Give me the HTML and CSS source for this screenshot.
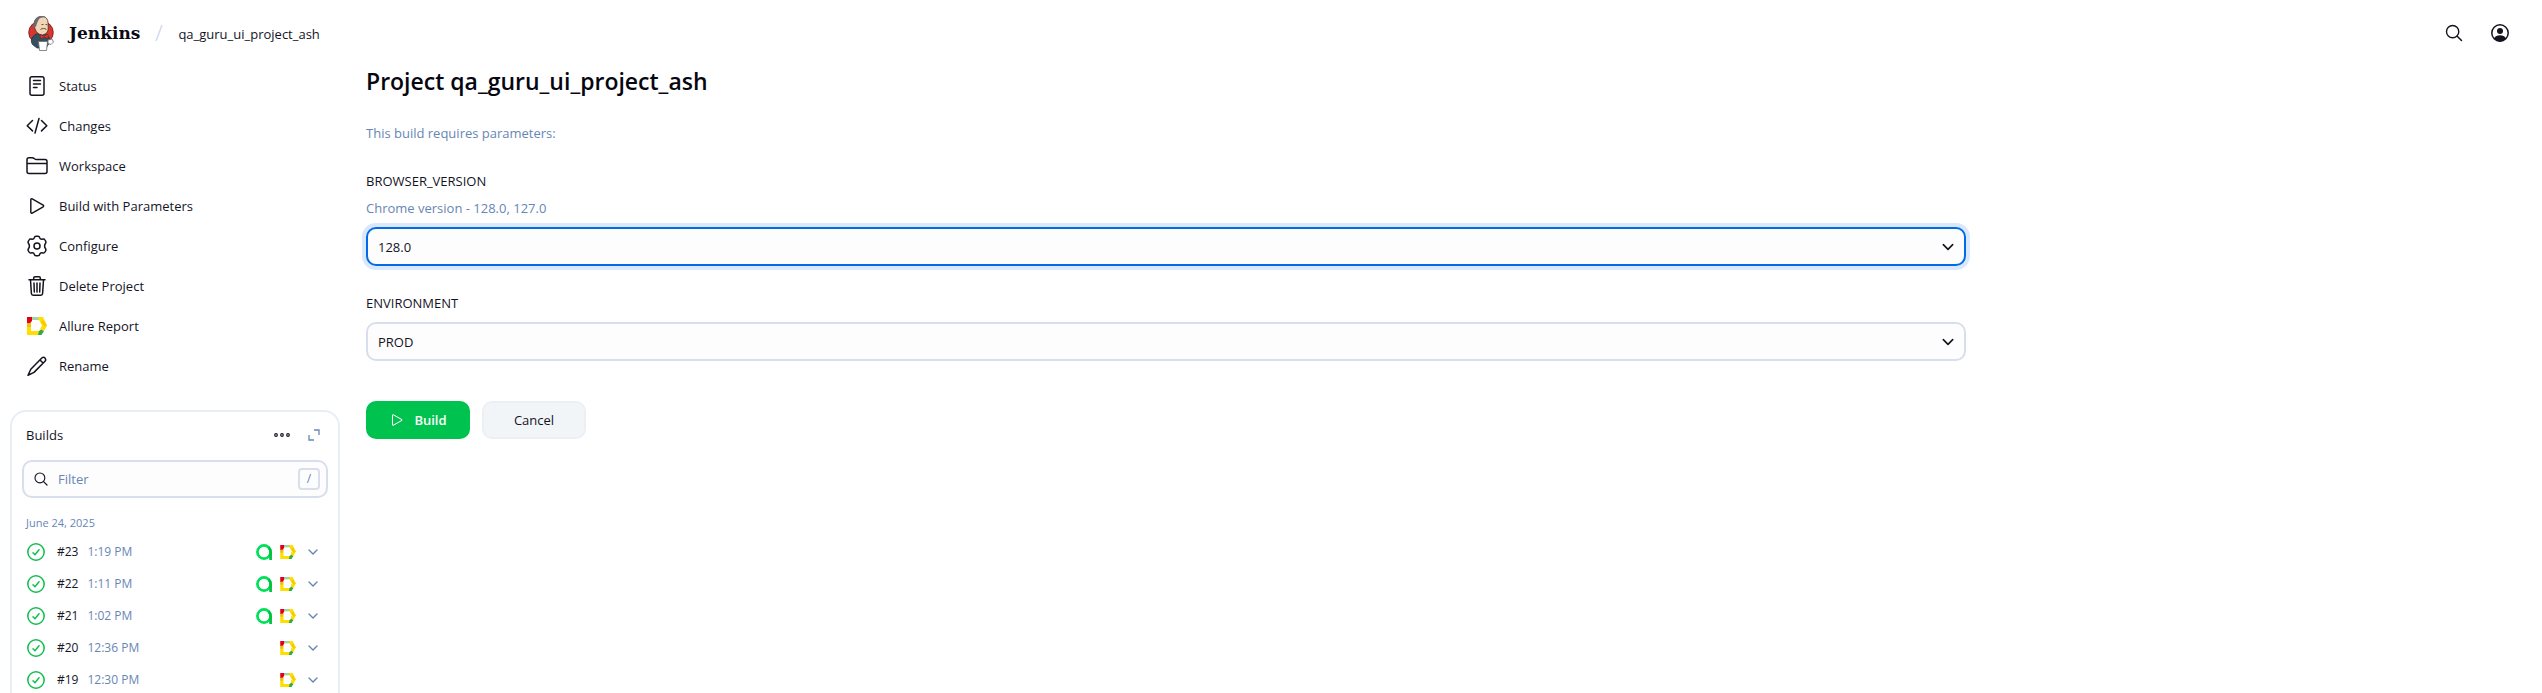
FILE: index.html
```html
<!DOCTYPE html>
<html lang="en">
<head>
<meta charset="utf-8">
<meta name="viewport" content="width=device-width, initial-scale=1">
<title>qa_guru_ui_project_ash [Jenkins]</title>
<link rel="stylesheet" href="styles.css">
</head>
<body>
<svg class="sprite" aria-hidden="true">
  <symbol id="chevron" viewBox="0 0 12 12"><path d="M2 4l4 4 4-4" fill="none" stroke="currentColor" stroke-width="1.400" stroke-linecap="round" stroke-linejoin="round"/></symbol>
  <symbol id="search" viewBox="0 0 512 512"><path d="M221 64a157 157 0 1 0 157 157A157 157 0 0 0 221 64z" fill="none" stroke="currentColor" stroke-width="36"/><path d="M338 338l110 110" fill="none" stroke="currentColor" stroke-width="38" stroke-linecap="round"/></symbol>
  <symbol id="play" viewBox="0 0 512 512"><path d="M112 111v290c0 17 18 28 33 20l254-145c15-9 15-31 0-40L145 91c-15-8-33 3-33 20z" fill="none" stroke="currentColor" stroke-width="34"/></symbol>
  <symbol id="allure" viewBox="0 0 20 18">
    <path d="M0 5h4v9h9v4H0z" fill="#ffde00"/>
    <path d="M0 5h4v5H0z" fill="#efc01c"/>
    <path d="M4 0h9v3H4z" fill="#a2d3a1"/>
    <path d="M11 0h5l4 8.500-3 5.500-4-2 2-3.500L12 3z" fill="#ffde00"/>
    <path d="M16 3l4 5.500-2 1-4-4z" fill="#f3cb00"/>
    <path d="M0 0h5v4L3 6H0z" fill="#e2001a"/>
    <path d="M11 18l1-4 2-1.500 3 1.500-2.500 4z" fill="#38a845"/>
  </symbol>
  <symbol id="testops" viewBox="0 0 16 16"><circle cx="8" cy="8" r="6.600" fill="none" stroke="#00e05a" stroke-width="2.700"/><path d="M12.500 3.300A6.600 6.600 0 0 1 14.600 8v8" fill="none" stroke="#00c340" stroke-width="2.700"/></symbol>
  <symbol id="success" viewBox="0 0 18 18"><g fill="none" stroke="#13bf50"><circle cx="9" cy="9" r="8.200" stroke-width="1.500"/><path d="M6 9.700l2 2 4-5" stroke-width="1.500" stroke-linecap="round" stroke-linejoin="round"/></g></symbol>
</svg>

<header class="header">
  <a class="brand" href="#">
    <svg class="brand-logo" viewBox="0 0 26 36" aria-hidden="true">
      <ellipse cx="13" cy="17.500" rx="12.300" ry="11.500" fill="#d33833" stroke="#7e1815" stroke-width=".8"/>
      <path d="M5 30C2 27 3 22 8 19h9c4 2 5 5 5 8l-4 6H9z" fill="#335061" stroke="#1d2c35" stroke-width=".7"/>
      <path d="M6.500 12C5.500 5 9 1.500 14 1.500s6.500 4 6 9c1 6-1.500 8.500-5.500 9.500-4.500-.5-7-3.500-8-8z" fill="#f0d6b7" stroke="#413024" stroke-width=".8"/>
      <path d="M5.500 13C4.500 5 8.500 1 13.500 1c2 0 3.500.5 4.500 1.500-4-.5-6.500.5-7.500 2.500S9 8.500 8.500 10s-1.500 3.500-3 3z" fill="#6d6b6d"/>
      <path d="M12.500 14.500c2-1.500 4-1.300 6 0M13.500 9.500h2M17.500 9.500H19" stroke="#6b4f3c" stroke-width="1" fill="none"/>
      <path d="M12 19.500l4 1.500 4-2v4.500L16 22l-3.500 2z" fill="#d33833" stroke="#7e1815" stroke-width=".6"/>
      <path d="M10.500 26.500h9l-1 9h-7z" fill="#fff" stroke="#6d6b6d" stroke-width=".8"/>
      <path d="M20 25l4-1 1.500 3-2.500 2.500-3-1z" fill="#fff" stroke="#6d6b6d" stroke-width=".8"/>
    </svg>
    <span class="brand-name">Jenkins</span>
  </a>
  <svg class="crumb-slash" viewBox="0 0 8 18" aria-hidden="true"><path d="M7 1L1 17" stroke="#cfdcee" stroke-width="1.500"/></svg>
  <a class="crumb" href="#">qa_guru_ui_project_ash</a>
  <div class="header-actions">
    <button class="icon-button" type="button" aria-label="Search"><svg class="icon" aria-hidden="true"><use href="#search"/></svg></button>
    <button class="icon-button" type="button" aria-label="Account"><svg class="icon" viewBox="0 0 20 20" aria-hidden="true"><circle cx="10" cy="10" r="8.200" fill="none" stroke="currentColor" stroke-width="1.500"/><circle cx="10" cy="8" r="3" fill="currentColor"/><path d="M4 15.500c1-2.500 3.500-3.200 6-3.200s5 .7 6 3.200A8.300 8.300 0 0 1 10 18.500a8.300 8.300 0 0 1-6-3z" fill="currentColor"/></svg></button>
  </div>
</header>

<div class="page">
  <aside class="side">
    <nav class="tasks">
      <a class="task" href="#"><svg class="task-icon" viewBox="0 0 22 22" aria-hidden="true"><g fill="none" stroke="currentColor" stroke-width="1.500" stroke-linecap="round"><rect x="4" y="1.700" width="14" height="18.600" rx="2"/><path d="M7.500 5.500h7M7.500 9h7M7.500 12.500h3.500"/></g></svg>Status</a>
      <a class="task" href="#"><svg class="task-icon" viewBox="0 0 22 22" aria-hidden="true"><path d="M6.500 5.500L1.200 10.700l5.300 5.200M15.500 5.500l5.300 5.200-5.300 5.200M13 3.500L9 18" fill="none" stroke="currentColor" stroke-width="1.500" stroke-linecap="round" stroke-linejoin="round"/></svg>Changes</a>
      <a class="task" href="#"><svg class="task-icon" viewBox="0 0 22 22" aria-hidden="true"><path d="M1 16.500V4.800Q1 2.800 3 2.800h3.200q1 0 1.800.6l.8.600q.6.400 1.500.4H19q2 0 2 2v10.100q0 2-2 2H3q-2 0-2-2zM1 8.500h20" fill="none" stroke="currentColor" stroke-width="1.500"/></svg>Workspace</a>
      <a class="task" href="#"><svg class="task-icon" aria-hidden="true"><use href="#play"/></svg>Build with Parameters</a>
      <a class="task" href="#"><svg class="task-icon" viewBox="0 0 22 22" aria-hidden="true"><g fill="none" stroke="currentColor" stroke-width="1.500" stroke-linejoin="round"><circle cx="11" cy="11" r="3"/><path d="M8.300 2.700Q8.600 1.300 10 1.300h2q1.400 0 1.700 1.400.5 1.600 2.200 1.500l1.200-.2q1.300-.2 1.900 1l.7 1.300q.6 1.200-.3 2.200-1.600 2.500 0 5 .9 1 .3 2.200L19 17q-.6 1.200-1.900 1l-1.200-.2q-1.700-.1-2.200 1.500-.3 1.400-1.700 1.400h-2q-1.400 0-1.700-1.400-.5-1.600-2.200-1.500l-1.200.2q-1.300.2-1.900-1l-.7-1.300q-.6-1.200.3-2.200 1.600-2.500 0-5-.9-1-.3-2.200L3 5q.6-1.200 1.900-1l1.200.2q1.700.1 2.200-1.500z"/></g></svg>Configure</a>
      <a class="task" href="#"><svg class="task-icon" viewBox="0 0 22 22" aria-hidden="true"><path d="M4.500 5l.9 13.500q.1 1.700 1.800 1.700h7.600q1.700 0 1.800-1.700L17.500 5M3 4.700h16M7.700 4.500V3q0-1.300 1.300-1.300h4q1.300 0 1.300 1.300v1.500M11 8v9M8 8l.3 9M14 8l-.3 9" fill="none" stroke="currentColor" stroke-width="1.500" stroke-linecap="round"/></svg>Delete Project</a>
      <a class="task" href="#"><svg class="task-icon task-icon--allure" aria-hidden="true"><use href="#allure"/></svg>Allure Report</a>
      <a class="task" href="#"><svg class="task-icon" viewBox="0 0 22 22" aria-hidden="true"><path d="M15.800 3l-11 11.200L2 20.200l6-2.800L19 6.200q1.400-1.600 0-3.200t-3.200 0zM14 5l3 3" fill="none" stroke="currentColor" stroke-width="1.500" stroke-linejoin="round"/></svg>Rename</a>
    </nav>

    <section class="builds">
      <div class="builds-head">
        <h2 class="builds-title">Builds</h2>
        <button class="mini-button" type="button" aria-label="More actions"><svg class="dots" viewBox="0 0 16 6" aria-hidden="true"><g fill="none" stroke="currentColor" stroke-width="1.200"><circle cx="2" cy="3" r="1.300"/><circle cx="8" cy="3" r="1.300"/><circle cx="14" cy="3" r="1.300"/></g></svg></button>
        <a class="mini-button mini-button--muted" href="#" aria-label="Expand"><svg class="expand" viewBox="0 0 12 12" aria-hidden="true"><path d="M6 1h5v5M1 6v5h5" fill="none" stroke="currentColor" stroke-width="1.300"/></svg></a>
      </div>
      <div class="filter">
        <svg class="filter-icon" aria-hidden="true"><use href="#search"/></svg>
        <input class="filter-input" type="text" placeholder="Filter" aria-label="Filter builds">
        <kbd class="filter-key">/</kbd>
      </div>
      <h3 class="builds-date">June 24, 2025</h3>
      <ul class="build-list">
        <li class="build"><svg class="build-status"><use href="#success"/></svg><a class="build-link" href="#">#23</a><span class="build-time">1:19 PM</span><svg class="badge"><use href="#testops"/></svg><svg class="badge badge--allure"><use href="#allure"/></svg><button class="build-menu" type="button" aria-label="Build 23 menu"><svg class="chevron"><use href="#chevron"/></svg></button></li>
        <li class="build"><svg class="build-status"><use href="#success"/></svg><a class="build-link" href="#">#22</a><span class="build-time">1:11 PM</span><svg class="badge"><use href="#testops"/></svg><svg class="badge badge--allure"><use href="#allure"/></svg><button class="build-menu" type="button" aria-label="Build 22 menu"><svg class="chevron"><use href="#chevron"/></svg></button></li>
        <li class="build"><svg class="build-status"><use href="#success"/></svg><a class="build-link" href="#">#21</a><span class="build-time">1:02 PM</span><svg class="badge"><use href="#testops"/></svg><svg class="badge badge--allure"><use href="#allure"/></svg><button class="build-menu" type="button" aria-label="Build 21 menu"><svg class="chevron"><use href="#chevron"/></svg></button></li>
        <li class="build"><svg class="build-status"><use href="#success"/></svg><a class="build-link" href="#">#20</a><span class="build-time">12:36 PM</span><svg class="badge badge--allure"><use href="#allure"/></svg><button class="build-menu" type="button" aria-label="Build 20 menu"><svg class="chevron"><use href="#chevron"/></svg></button></li>
        <li class="build"><svg class="build-status"><use href="#success"/></svg><a class="build-link" href="#">#19</a><span class="build-time">12:30 PM</span><svg class="badge badge--allure"><use href="#allure"/></svg><button class="build-menu" type="button" aria-label="Build 19 menu"><svg class="chevron"><use href="#chevron"/></svg></button></li>
      </ul>
    </section>
  </aside>

  <main class="main">
    <h1 class="title">Project qa_guru_ui_project_ash</h1>
    <p class="intro">This build requires parameters:</p>
    <form class="form">
      <div class="field">
        <label class="label" for="browser-version">BROWSER_VERSION</label>
        <p class="hint" id="browser-hint">Chrome version - 128.0, 127.0</p>
        <div class="select-wrap">
          <select class="select select--active" id="browser-version" aria-describedby="browser-hint"><option>128.0</option><option>127.0</option></select>
          <svg class="select-chevron" aria-hidden="true"><use href="#chevron"/></svg>
        </div>
      </div>
      <div class="field">
        <label class="label" for="environment">ENVIRONMENT</label>
        <div class="select-wrap">
          <select class="select" id="environment"><option>PROD</option></select>
          <svg class="select-chevron" aria-hidden="true"><use href="#chevron"/></svg>
        </div>
      </div>
      <div class="actions">
        <button class="button button--primary" type="button"><svg class="button-icon" aria-hidden="true"><use href="#play"/></svg>Build</button>
        <button class="button" type="button">Cancel</button>
      </div>
    </form>
  </main>
</div>
</body>
</html>
```

FILE: styles.css
```css
:root {
  --text: #14141f;
  --muted: #6786b5;
  --border: #d8deeb;
  --card-border: #e9edf5;
  --field: #fdfdfe;
  --blue: #006be6;
  --green: #00c24e;
}

* { box-sizing: border-box; }

body {
  margin: 0;
  height: 100vh;
  display: flex;
  flex-direction: column;
  overflow: hidden;
  background: #fff;
  color: var(--text);
  font: 13px/20px "Open Sans", "Noto Sans", sans-serif;
}

a { color: inherit; text-decoration: none; }
h1, h2, h3, p, ul { margin: 0; padding: 0; }
button, input, select { font: inherit; color: inherit; }
button { cursor: pointer; }
.sprite { position: absolute; width: 0; height: 0; }

/* Header */
.header {
  display: flex;
  align-items: center;
  flex: none;
  height: 66px;
  padding: 0 32px 0 28px;
}
.brand { display: flex; align-items: center; gap: 15px; }
.brand-logo { width: 26px; height: 36px; }
.brand-name { font: bold 17px/20px "DejaVu Serif", serif; color: #0b0b16; }
.crumb-slash { width: 8px; height: 18px; margin: 0 15px; }
.crumb { padding-top: 2px; }
.header-actions { display: flex; gap: 26px; margin-left: auto; }
.icon-button { display: flex; padding: 0; border: 0; background: none; }
.icon { width: 20px; height: 20px; }

/* Page columns */
.page {
  display: grid;
  grid-template-columns: 330px minmax(0, 1600px);
  grid-template-rows: minmax(0, 1fr);
  gap: 26px;
  flex: 1;
  min-height: 0;
  padding: 0 10px;
}
.side { display: flex; flex-direction: column; min-height: 0; }

/* Task links */
.tasks { display: flex; flex-direction: column; padding-bottom: 24px; }
.task {
  display: flex;
  align-items: center;
  flex: none;
  gap: 11px;
  height: 40px;
  padding-left: 16px;
}
.task-icon { width: 22px; height: 22px; }
.task-icon--allure { height: 18px; }

/* Build history */
.builds {
  flex: 1;
  min-height: 0;
  overflow: hidden;
  padding: 8px 10px 0;
  border: 2px solid var(--card-border);
  border-bottom: 0;
  border-radius: 16px 16px 0 0;
}
.builds-head {
  display: flex;
  align-items: center;
  gap: 17px;
  height: 30px;
  padding: 0 8px 0 4px;
}
.builds-title { margin-right: auto; font-size: 13px; font-weight: 500; }
.mini-button { display: flex; padding: 0; border: 0; background: none; }
.mini-button--muted { color: var(--muted); }
.dots { width: 18px; height: 6px; }
.expand { width: 12px; height: 12px; }
.filter {
  display: flex;
  align-items: center;
  gap: 9px;
  height: 38px;
  margin-top: 10px;
  padding: 0 6px 0 9px;
  border: 2px solid var(--border);
  border-radius: 10px;
  background: var(--field);
}
.filter-icon { width: 16px; height: 16px; }
.filter-input { flex: 1; min-width: 0; padding: 0; border: 0; outline: 0; background: none; }
.filter-input::placeholder { color: var(--muted); opacity: 1; }
.filter-key {
  width: 22px;
  height: 22px;
  border: 2px solid var(--border);
  border-radius: 4px;
  color: var(--muted);
  font: 12px/18px "Open Sans", sans-serif;
  text-align: center;
}
.builds-date {
  margin-top: 16px;
  padding-left: 4px;
  color: var(--muted);
  font-size: 11px;
  font-weight: 500;
  line-height: 18px;
}
.build-list { margin-top: 4px; list-style: none; font-size: 12px; }
.build { display: flex; align-items: center; height: 32px; padding: 0 9px 0 5px; }
.build-status { width: 18px; height: 18px; margin-right: 12px; }
.build-link { margin-right: 9px; }
.build-time { margin-right: auto; color: var(--muted); }
.badge { width: 16px; height: 16px; margin-right: 8px; }
.badge--allure { height: 14px; margin-right: 11px; }
.build-menu { display: flex; padding: 0; border: 0; background: none; color: var(--muted); }
.chevron { width: 12px; height: 12px; }

/* Parameter form */
.title { font-size: 23px; font-weight: 600; line-height: 30px; color: #060611; }
.intro { margin-top: 27px; color: var(--muted); }
.form { margin-top: 28px; }
.field { margin-bottom: 27px; }
.label { display: block; }
.hint { margin-top: 7px; color: var(--muted); }
.select-wrap { position: relative; margin-top: 9px; }
.select {
  display: block;
  width: 100%;
  height: 39px;
  padding: 0 32px 0 10px;
  border: 2px solid var(--border);
  border-radius: 10px;
  outline: 0;
  background: var(--field);
  appearance: none;
}
.select--active { border-color: var(--blue); box-shadow: 0 0 0 4px #d9e8fc; }
.select-chevron {
  position: absolute;
  top: 13px;
  right: 11px;
  width: 14px;
  height: 14px;
  pointer-events: none;
}
.actions { display: flex; gap: 12px; margin-top: 40px; }
.button {
  display: flex;
  align-items: center;
  justify-content: center;
  gap: 9px;
  min-width: 104px;
  height: 38px;
  padding: 0 20px;
  border: 2px solid #ecf0f4;
  border-radius: 10px;
  background: #f2f5f8;
}
.button--primary { border-color: var(--green); background: var(--green); color: #fff; font-weight: 600; }
.button-icon { width: 16px; height: 16px; }
```
